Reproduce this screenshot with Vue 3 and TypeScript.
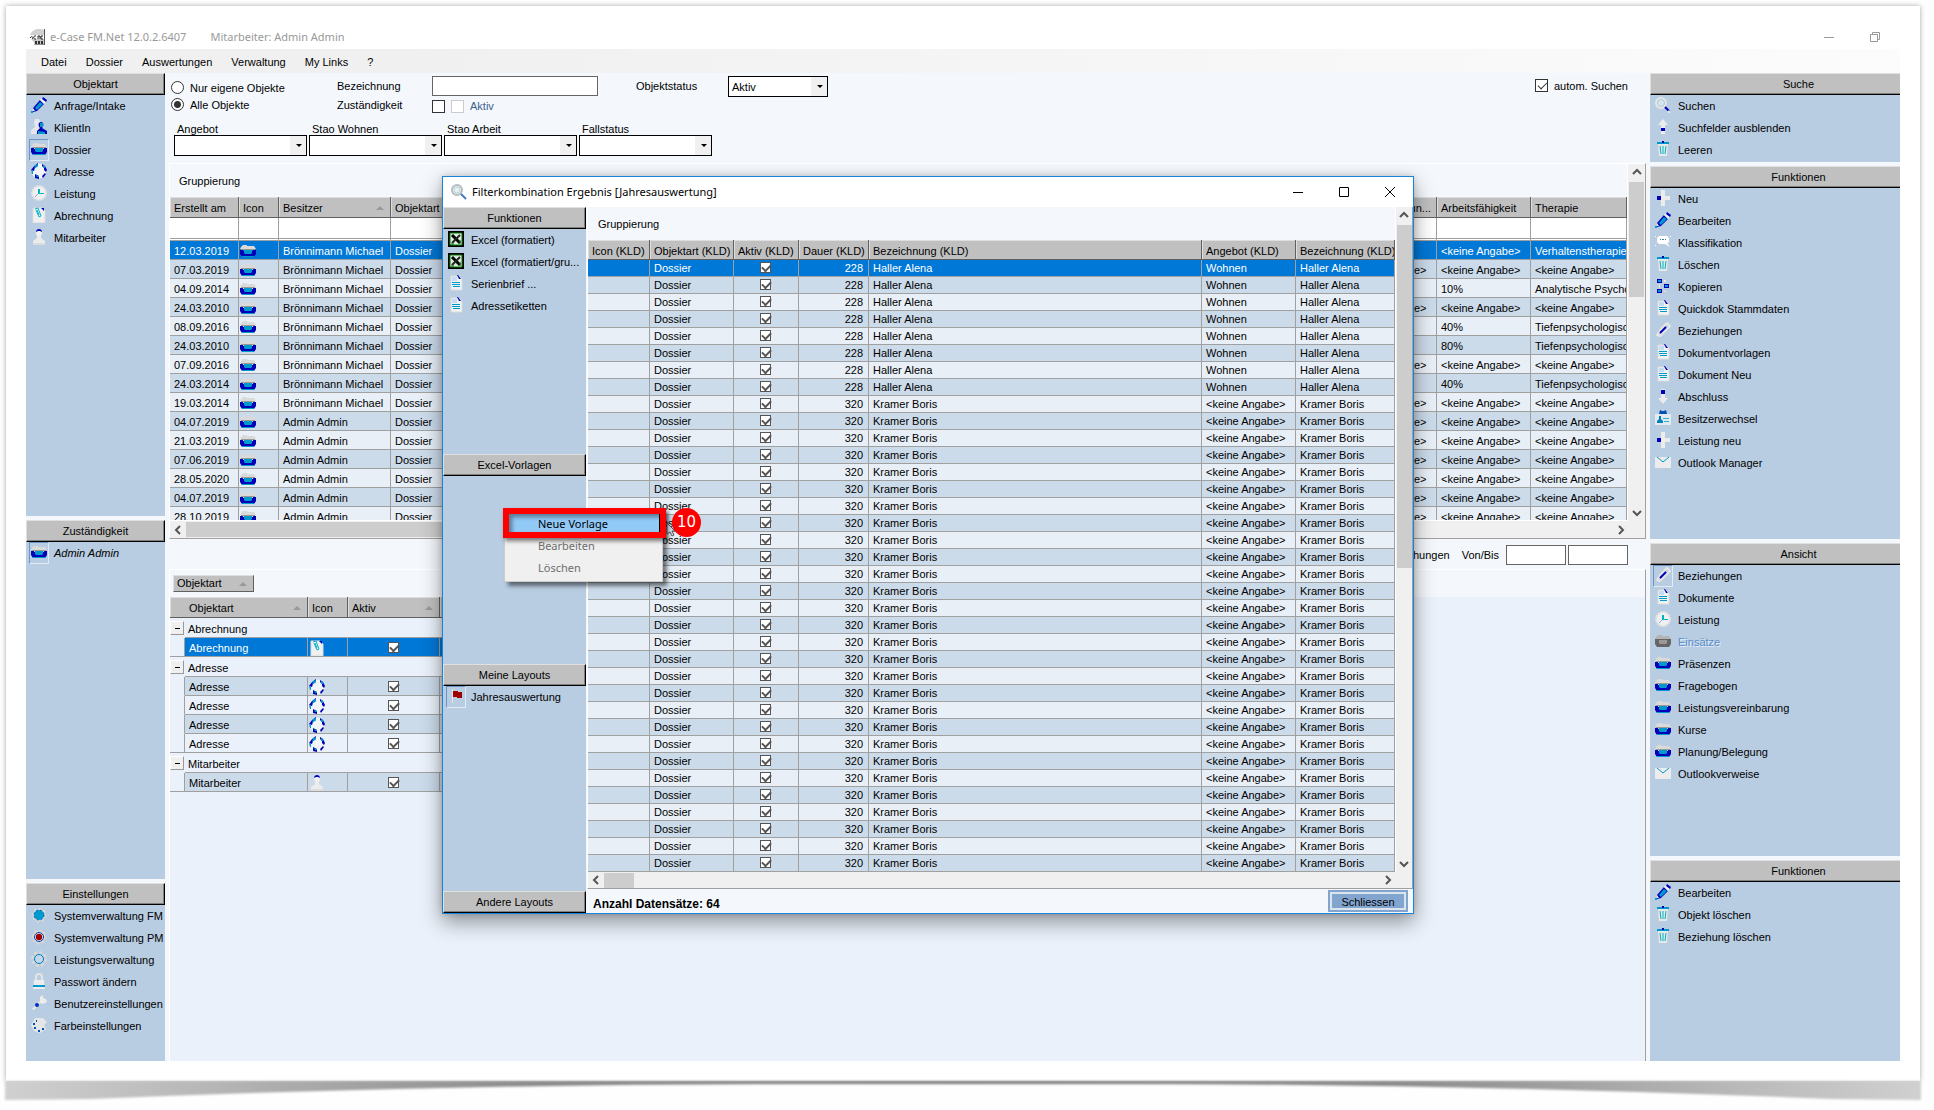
<script setup lang="ts">
interface Entry {
  icon: string
  text: string
  active?: boolean
  disabled?: boolean
  italic?: boolean
}
interface Panel {
  title: string
  entries: Entry[]
}

const menu: string[] = ['Datei', 'Dossier', 'Auswertungen', 'Verwaltung', 'My Links', '?']

const leftPanels: Panel[] = [
  {
    title: 'Objektart',
    entries: [
      { icon: 'pencil', text: 'Anfrage/Intake' },
      { icon: 'client', text: 'KlientIn' },
      { icon: 'folder', text: 'Dossier', active: true },
      { icon: 'globe', text: 'Adresse' },
      { icon: 'clock', text: 'Leistung' },
      { icon: 'bill', text: 'Abrechnung' },
      { icon: 'staff', text: 'Mitarbeiter' },
    ],
  },
  { title: 'Zuständigkeit', entries: [{ icon: 'folder', text: 'Admin Admin', active: true, italic: true }] },
  {
    title: 'Einstellungen',
    entries: [
      { icon: 'gear-blue', text: 'Systemverwaltung FM' },
      { icon: 'gear-red', text: 'Systemverwaltung PM' },
      { icon: 'gear-open', text: 'Leistungsverwaltung' },
      { icon: 'lock', text: 'Passwort ändern' },
      { icon: 'wrench', text: 'Benutzereinstellungen' },
      { icon: 'palette', text: 'Farbeinstellungen' },
    ],
  },
]

const rightPanels: Panel[] = [
  {
    title: 'Suche',
    entries: [
      { icon: 'search', text: 'Suchen' },
      { icon: 'up', text: 'Suchfelder ausblenden' },
      { icon: 'trash', text: 'Leeren' },
    ],
  },
  {
    title: 'Funktionen',
    entries: [
      { icon: 'plus', text: 'Neu' },
      { icon: 'pencil', text: 'Bearbeiten' },
      { icon: 'bubble', text: 'Klassifikation' },
      { icon: 'trash', text: 'Löschen' },
      { icon: 'copy', text: 'Kopieren' },
      { icon: 'doc', text: 'Quickdok Stammdaten' },
      { icon: 'link', text: 'Beziehungen' },
      { icon: 'doc', text: 'Dokumentvorlagen' },
      { icon: 'doc', text: 'Dokument Neu' },
      { icon: 'down', text: 'Abschluss' },
      { icon: 'badge', text: 'Besitzerwechsel' },
      { icon: 'plus', text: 'Leistung neu' },
      { icon: 'mail', text: 'Outlook Manager' },
    ],
  },
  {
    title: 'Ansicht',
    entries: [
      { icon: 'link', text: 'Beziehungen', active: true },
      { icon: 'doc', text: 'Dokumente' },
      { icon: 'clock', text: 'Leistung' },
      { icon: 'folder-grey', text: 'Einsätze', disabled: true },
      { icon: 'folder', text: 'Präsenzen' },
      { icon: 'folder', text: 'Fragebogen' },
      { icon: 'folder', text: 'Leistungsvereinbarung' },
      { icon: 'folder', text: 'Kurse' },
      { icon: 'folder', text: 'Planung/Belegung' },
      { icon: 'mail', text: 'Outlookverweise' },
    ],
  },
  {
    title: 'Funktionen',
    entries: [
      { icon: 'pencil', text: 'Bearbeiten' },
      { icon: 'trash', text: 'Objekt löschen' },
      { icon: 'trash', text: 'Beziehung löschen' },
    ],
  },
]

const dialogPanels: Panel[] = [
  {
    title: 'Funktionen',
    entries: [
      { icon: 'excel', text: 'Excel (formatiert)' },
      { icon: 'excel', text: 'Excel (formatiert/gru...' },
      { icon: 'doc', text: 'Serienbrief ...' },
      { icon: 'doc', text: 'Adressetiketten' },
    ],
  },
  { title: 'Excel-Vorlagen', entries: [] },
  { title: 'Meine Layouts', entries: [{ icon: 'flag', text: 'Jahresauswertung', active: true }] },
  { title: 'Andere Layouts', entries: [] },
]

const filters: string[] = ['Angebot', 'Stao Wohnen', 'Stao Arbeit', 'Fallstatus']

const none = '<keine Angabe>'
const deep = 'Tiefenpsychologisch fundiert'
const owner = 'Brönnimann Michael'
const admin = 'Admin Admin'
const dossiers: string[][] = [
  ['12.03.2019', owner, '', none, 'Verhaltenstherapie'],
  ['07.03.2019', owner, none, none, none],
  ['04.09.2014', owner, '', '10%', 'Analytische Psychotherapie'],
  ['24.03.2010', owner, none, none, none],
  ['08.09.2016', owner, '', '40%', deep],
  ['24.03.2010', owner, '', '80%', deep],
  ['07.09.2016', owner, none, none, none],
  ['24.03.2014', owner, '', '40%', deep],
  ['19.03.2014', owner, none, none, none],
  ['04.07.2019', admin, none, none, none],
  ['21.03.2019', admin, none, none, none],
  ['07.06.2019', admin, none, none, none],
  ['28.05.2020', admin, none, none, none],
  ['04.07.2019', admin, none, none, none],
  ['28.10.2019', admin, none, none, none],
]

const groups: { name: string; icon: string; count: number; selected?: boolean }[] = [
  { name: 'Abrechnung', icon: 'bill', count: 1, selected: true },
  { name: 'Adresse', icon: 'globe', count: 4 },
  { name: 'Mitarbeiter', icon: 'staff', count: 1 },
]

const resultHeads: string[] = [
  'Icon (KLD)', 'Objektart (KLD)', 'Aktiv (KLD)', 'Dauer (KLD)', 'Bezeichnung (KLD)', 'Angebot (KLD)', 'Bezeichnung (KLD)',
]
const results = Array.from({ length: 36 }, (_, i) =>
  i < 8 ? { days: 228, name: 'Haller Alena', offer: 'Wohnen' } : { days: 320, name: 'Kramer Boris', offer: none },
)
</script>

<template>
  <svg class="defs" aria-hidden="true">
    <defs>
      <symbol id="i-pencil" viewBox="0 0 16 16">
        <path d="M2 11 9 3l4 4-7 7-4 1z" fill="#0000bb" /><path d="M4 11 9 5l3 2-6 6z" fill="#0099cc" />
        <path d="m9 3 2-2 4 4-2 2z" fill="#f0f0f0" /><path d="m12 0 4 3-1 2-4-3z" fill="#0000bb" />
        <path d="M2 11 4 14 2 14z" fill="#eee" /><path d="M0 14h2v2H0z" fill="#0099cc" />
      </symbol>
      <symbol id="i-client" viewBox="0 0 16 16">
        <path d="M4 0h4l2 4-1 4 3 3v4H0v-4l4-3-1-4z" fill="#e4e8ee" />
        <path d="M10 3c3 0 3 4 1 6l5 3v3H6v-3l3-3c-2-2-2-6 1-6z" fill="#0000bb" /><path d="M9 4h3v4H9zM7 12l7 1v2H7z" fill="#0099cc" />
      </symbol>
      <symbol id="i-folder" viewBox="0 0 16 16">
        <path d="M3 2h4v1h7l2 3H0l1-2z" fill="#dadada" /><path d="M1 6h14v1H1z" fill="#999" />
        <path d="M0 7h3v1h10V7h3v4l-2 3H2l-2-3z" fill="#0000bb" /><path d="M4 7h8v3l-1 1H5l-1-1z" fill="#0099cc" /><path d="M2 13h12v1H2z" fill="#0099cc" />
      </symbol>
      <symbol id="i-folder-grey" viewBox="0 0 16 16">
        <path d="M3 2h4v1h7l2 3H0l1-2z" fill="#b4b4b4" /><path d="M0 6h16v5l-2 3H2l-2-3z" fill="#666" /><path d="M4 7h8v3l-1 1H5l-1-1z" fill="#999" />
      </symbol>
      <symbol id="i-globe" viewBox="0 0 16 16">
        <circle cx="8" cy="8" r="7.5" fill="#f2f4f6" />
        <path d="m3 3 4-3v3L4 5 3 8 0 7zM11 1l3 2 2 4-1 2-2-2 0-2-2-2zM14 10l1 1-3 4-1-2zM4 11l4 2v3l-4-1z" fill="#0000bb" />
        <path d="m4 2 3-1v2L3 6zM0 7l2 1v3l-1 0zM12 2l2 1v2h-2zM5 12l3 1v1H6z" fill="#0099cc" />
      </symbol>
      <symbol id="i-clock" viewBox="0 0 16 16">
        <circle cx="8" cy="8" r="7" fill="#f0f0f0" stroke="#e2e2e2" stroke-width="2" stroke-dasharray="2 1" />
        <path d="M7 4h2v4h4v1H7z" fill="#00b4c8" /><path d="m7 9-3 3" stroke="#8ad" />
      </symbol>
      <symbol id="i-bill" viewBox="0 0 16 16">
        <path d="M2 1h9l3 3v12H2z" fill="#f0f0f0" stroke="#ddd" /><path d="M10 1h3v3z" fill="#0000bb" />
        <path d="m4 2 3-1 3 8-2 1-3-7M6 3l2 5" fill="none" stroke="#00b4c8" />
      </symbol>
      <symbol id="i-staff" viewBox="0 0 16 16">
        <circle cx="8" cy="4" r="3" fill="#f0f0f0" /><path d="M5 3c0-4 6-4 6 0l-2-1H7z" fill="#0000bb" />
        <path d="M6 6h4v3l4 3v3H2v-3l4-3z" fill="#ececec" /><path d="M2 14h12v2H2z" fill="#ddd" />
      </symbol>
      <symbol id="i-gear-blue" viewBox="0 0 16 16">
        <circle cx="8" cy="8" r="6.500" fill="#d8d8d8" stroke="#d8d8d8" stroke-width="2" stroke-dasharray="2 3" />
        <circle cx="8" cy="8" r="5" fill="#0099d0" stroke="#0060c0" stroke-dasharray="2 2" />
      </symbol>
      <symbol id="i-gear-red" viewBox="0 0 16 16">
        <circle cx="8" cy="8" r="6.500" fill="#d8d8d8" stroke="#d8d8d8" stroke-width="2" stroke-dasharray="2 3" />
        <circle cx="8" cy="8" r="4.500" fill="#eee" stroke="#003cb0" /><circle cx="8" cy="8" r="3.200" fill="#a00000" />
      </symbol>
      <symbol id="i-gear-open" viewBox="0 0 16 16">
        <circle cx="8" cy="8" r="6.500" fill="none" stroke="#d8d8d8" stroke-width="3" stroke-dasharray="3 2" />
        <circle cx="8" cy="8" r="4.500" fill="#c4d6ea" stroke="#0080c0" />
      </symbol>
      <symbol id="i-lock" viewBox="0 0 16 16">
        <path d="M5 8V4c0-4 6-4 6 0v4" fill="none" stroke="#e4e4e4" stroke-width="2" /><path d="M3 7h10l1 9H2z" fill="#ececec" /><path d="M2 12h12v2H2z" fill="#0099cc" />
      </symbol>
      <symbol id="i-wrench" viewBox="0 0 16 16">
        <path d="m1 14 8-8V2l3-2v3l3 1 1 3-4 2-3-1-6 7z" fill="#ececec" /><circle cx="6" cy="10" r="2" fill="#0030c0" />
      </symbol>
      <symbol id="i-palette" viewBox="0 0 16 16">
        <path d="M4 1h8l4 4-3 3 2 4-6 4-6-2-3-6z" fill="#e6e6e6" />
        <path d="M2 6h2v2H2zM3 10h2v2H3zM7 13h2v2H7zM11 11h2v2h-2zM5 3h1v2H5z" fill="#0050c0" />
      </symbol>
      <symbol id="i-search" viewBox="0 0 16 16">
        <circle cx="6" cy="6" r="5" fill="#d6e6ee" stroke="#e6e6e6" stroke-width="2" /><circle cx="6" cy="6" r="3.500" fill="none" stroke="#a8ccd4" />
        <path d="m10 10 4 4" stroke="#0000bb" stroke-width="2" /><path d="m13 14 2 2" stroke="#e6e6e6" stroke-width="2" />
      </symbol>
      <symbol id="i-glass" viewBox="0 0 16 16">
        <circle cx="6" cy="6" r="5" fill="#e8f0f2" stroke="#b8bcc0" stroke-width="2" /><circle cx="6" cy="6" r="3" fill="none" stroke="#b4d4d8" />
        <path d="m10 10 5 5" stroke="#4a7ac0" stroke-width="2" />
      </symbol>
      <symbol id="i-up" viewBox="0 0 16 16"><path d="m8 0 5 6h-3v9H6V6H3z" fill="#ececec" /><path d="M6 9h4v3H6z" fill="#0000bb" /></symbol>
      <symbol id="i-down" viewBox="0 0 16 16"><path d="m8 16 5-6h-3V1H6v9H3z" fill="#ececec" /><path d="M6 2h4v4H6z" fill="#0000bb" /></symbol>
      <symbol id="i-trash" viewBox="0 0 16 16">
        <path d="M3 3h10l-1 12H4z" fill="#e8e8e8" /><path d="M2 1h12v2H2z" fill="#0099cc" /><path d="M7 0h2v2H7z" fill="#0000bb" />
        <path d="M5 5l1 8M8 5v8M11 5l-1 8" stroke="#00b0c0" />
      </symbol>
      <symbol id="i-plus" viewBox="0 0 16 16"><path d="M6 0h4v6h5v4h-5v6H6v-6H2V6h4z" fill="#ececec" /><path d="M2 6h4v4H2z" fill="#0000bb" /></symbol>
      <symbol id="i-bubble" viewBox="0 0 16 16">
        <path d="M0 2h1v1H0zM15 2h1v1h-1zM0 11h1v1H0z" fill="#fff" /><path d="M4 2h8l2 2v4l-2 2h1l2 3-5-3H4L2 8V4z" fill="#fff" />
        <path d="M5 5h1v1H5zM7 5h2v1H7zM10 5h1v1h-1z" fill="#3080a0" />
      </symbol>
      <symbol id="i-copy" viewBox="0 0 16 16">
        <path d="M2 1h5v4H2zM9 6h5v4H9zM2 11h5v4H2z" fill="#0000bb" /><path d="M3 2h3v2H3zM10 7h3v2h-3zM3 12h3v2H3z" fill="#0099cc" />
        <path d="M9 2h2v2H9zM4 6h1v4H4zM9 13h2v1H9z" fill="#e8e8e8" />
      </symbol>
      <symbol id="i-doc" viewBox="0 0 16 16">
        <path d="M3 1h8l3 3v11H3z" fill="#f0f2f4" stroke="#dcdcdc" /><path d="M4 2h5v4H4z" fill="#c4dcf4" /><path d="M9 0h1l3 4h-2z" fill="#0000bb" />
        <path d="M4 7.500h8M4 9.500h8M5 11.500h7" stroke="#0099cc" />
      </symbol>
      <symbol id="i-link" viewBox="0 0 16 16">
        <path d="m2 13 4-6 3 3-4 4zM7 6l5-5 3 3-5 5z" fill="none" stroke="#e6e6e6" stroke-width="2" stroke-linejoin="round" /><path d="m5 11 6-6" stroke="#0000bb" stroke-width="2" />
      </symbol>
      <symbol id="i-badge" viewBox="0 0 16 16">
        <path d="M0 4h16v11H0z" fill="#e4eaf0" /><path d="m5 0 2 1h2l2-1 1 4H4z" fill="#0050b8" />
        <path d="M4 6h2v3l2 2v2H2v-2l2-2z" fill="#0080c0" /><path d="M8 8h6v1H8zM9 11h5v1H9z" fill="#20b4d0" />
      </symbol>
      <symbol id="i-mail" viewBox="0 0 16 16"><path d="M0 3h16v11H0z" fill="#ececec" /><path d="m2 3 6 5 6-5" fill="none" stroke="#0099cc" stroke-width="1" /></symbol>
      <symbol id="i-excel" viewBox="0 0 16 16">
        <path d="M0 0h16v16H0z" fill="#000" /><path d="M2 2h12v12H2z" fill="#dcecdc" stroke="#087808" />
        <path d="m4 4 8 8" stroke="#000" stroke-width="3" /><path d="m12 4-8 8" stroke="#222" stroke-width="2" /><path d="M12 9v4M3 13h3" stroke="#087808" />
      </symbol>
      <symbol id="i-flag" viewBox="0 0 16 16"><path d="M4 1h1v14H4z" fill="#e8e8e8" /><path d="M5 3h5v1h4v6H9V9H5z" fill="#a00000" /></symbol>
      <symbol id="i-app" viewBox="0 0 16 16">
        <path d="M1 6c2-6 9-7 14-5v5z" fill="#d0d0d0" /><path d="M2 10h13v6H6l-1-3z" fill="#c8c8c8" /><path d="M15.500 0v16H5" fill="none" stroke="#555" />
        <path d="M1 9c2-3 4 0 2 1M7 7c-3-1-3 4 0 3M9 10V7h2v3M14 7h-2v3h2" fill="none" stroke="#222" /><path d="M6 12h2v3H6zM9 12h2v3H9zM12 12h2v3h-2z" fill="#333" />
      </symbol>
    </defs>
  </svg>

  <div class="page">
    <div class="paper">
      <header class="titlebar">
        <svg class="ic"><use href="#i-app" /></svg>
        <span class="app-name">e-Case FM.Net 12.0.2.6407</span>
        <span class="app-user">Mitarbeiter: Admin Admin</span>
        <button class="win" aria-label="Minimieren"><svg viewBox="0 0 10 10"><path d="M0 5.500h10" /></svg></button>
        <button class="win last" aria-label="Wiederherstellen"><svg viewBox="0 0 10 10"><path d="M.5 2.500h7v7h-7zM2.500 2.500v-2h7v7h-2" /></svg></button>
      </header>
      <nav class="menubar"><button v-for="m in menu" :key="m">{{ m }}</button></nav>

      <div class="stage">
        <aside class="side left">
          <section v-for="p in leftPanels" :key="p.title" class="panel">
            <h2>{{ p.title }}</h2>
            <button v-for="e in p.entries" :key="e.text" class="entry" :class="{ active: e.active, italic: e.italic }">
              <span class="slot"><svg class="ic"><use :href="'#i-' + e.icon" /></svg></span>{{ e.text }}
            </button>
          </section>
        </aside>

        <main class="center">
          <form class="search" @submit.prevent>
            <div class="search-top">
              <div class="radios">
                <label><input type="radio" name="scope" />Nur eigene Objekte</label>
                <label><input type="radio" name="scope" checked />Alle Objekte</label>
              </div>
              <div class="names">
                <label for="bez">Bezeichnung</label>
                <label for="zust">Zuständigkeit</label>
              </div>
              <div class="fields">
                <input id="bez" type="text" class="txt" />
                <div class="checks">
                  <input id="zust" type="checkbox" class="tick" />
                  <label><input type="checkbox" class="tick" disabled />Aktiv</label>
                </div>
              </div>
              <label class="status-label" for="status">Objektstatus</label>
              <span class="combo status"><select id="status"><option>Aktiv</option></select></span>
              <label class="auto"><input type="checkbox" class="tick" checked />autom. Suchen</label>
            </div>
            <div class="search-bottom">
              <label v-for="f in filters" :key="f">{{ f }}<span class="combo"><select><option></option></select></span></label>
            </div>
          </form>

          <section class="grid-box">
            <div class="grid-main">
              <div class="grouping">Gruppierung</div>
              <table class="grid dossiers">
                <colgroup><col class="w69" /><col class="w40" /><col class="w112" /><col class="w94" /><col /><col class="w94" /><col class="w94" /><col class="w96" /></colgroup>
                <thead>
                  <tr>
                    <th>Erstellt am</th><th>Icon</th><th>Besitzer<i class="sort"></i></th><th>Objektart</th><th></th>
                    <th class="end">Einschränkun...</th><th>Arbeitsfähigkeit</th><th>Therapie</th>
                  </tr>
                  <tr class="filter-row"><td v-for="n in 8" :key="n"></td></tr>
                </thead>
                <tbody>
                  <tr v-for="(d, i) in dossiers" :key="i" :class="{ sel: i === 0 }">
                    <td>{{ d[0] }}</td><td class="ico"><svg class="ic"><use href="#i-folder" /></svg></td><td>{{ d[1] }}</td><td>Dossier</td><td></td>
                    <td>{{ d[2] }}</td><td>{{ d[3] }}</td><td>{{ d[4] }}</td>
                  </tr>
                </tbody>
              </table>
            </div>
            <div class="vbar">
              <svg class="chev" viewBox="0 0 10 10"><path d="m1 7 4-4 4 4" /></svg><i class="thumb main-v"></i>
              <svg class="chev push-v" viewBox="0 0 10 10"><path d="m1 3 4 4 4-4" /></svg>
            </div>
            <div class="hbar">
              <svg class="chev" viewBox="0 0 10 10"><path d="m7 1-4 4 4 4" /></svg><i class="thumb main-h"></i>
              <svg class="chev push-h" viewBox="0 0 10 10"><path d="m3 1 4 4-4 4" /></svg>
            </div>
          </section>

          <div class="range">
            <span>Beziehungen</span>
            <label for="von">Von/Bis</label>
            <input id="von" type="text" class="txt" /><input type="text" class="txt" aria-label="Bis" />
          </div>

          <section class="relations">
            <div class="grouping2"><button class="chip">Objektart<i class="sort"></i></button></div>
            <table class="grid rel">
              <colgroup><col class="w15" /><col class="w123" /><col class="w40" /><col class="w92" /><col class="w60" /></colgroup>
              <thead><tr><th colspan="2" class="indent">Objektart<i class="sort"></i></th><th>Icon</th><th>Aktiv<i class="sort"></i></th><th></th></tr></thead>
              <tbody v-for="g in groups" :key="g.name">
                <tr class="group"><td><button class="fold" :aria-label="g.name + ' zuklappen'"></button></td><td colspan="4">{{ g.name }}</td></tr>
                <tr v-for="n in g.count" :key="n" :class="{ sel: g.selected, odd: n % 2 === 1 }">
                  <td class="gutter"></td><td>{{ g.name }}</td>
                  <td class="ico"><svg class="ic"><use :href="'#i-' + g.icon" /></svg></td>
                  <td class="mid"><input type="checkbox" class="mark" checked :aria-label="g.name + ' aktiv'" /></td><td></td>
                </tr>
              </tbody>
            </table>
          </section>
        </main>

        <aside class="side right">
          <section v-for="(p, i) in rightPanels" :key="i" class="panel">
            <h2>{{ p.title }}</h2>
            <button v-for="e in p.entries" :key="e.text" class="entry" :class="{ active: e.active }" :disabled="e.disabled">
              <span class="slot"><svg class="ic"><use :href="'#i-' + e.icon" /></svg></span>{{ e.text }}
            </button>
          </section>
        </aside>

        <div class="dialog" role="dialog" aria-labelledby="dlg-title">
          <header class="dlg-bar">
            <svg class="ic"><use href="#i-glass" /></svg>
            <span id="dlg-title">Filterkombination Ergebnis [Jahresauswertung]</span>
            <button class="win" aria-label="Minimieren"><svg viewBox="0 0 10 10"><path d="M0 5.500h10" /></svg></button>
            <button class="win" aria-label="Maximieren"><svg viewBox="0 0 10 10"><path d="M.5.500h9v9h-9z" /></svg></button>
            <button class="win" aria-label="Schliessen"><svg viewBox="0 0 10 10"><path d="m0 0 10 10M10 0 0 10" /></svg></button>
          </header>
          <div class="dlg-body">
            <aside class="dlg-side">
              <section v-for="p in dialogPanels" :key="p.title" class="panel">
                <h2>{{ p.title }}</h2>
                <button v-for="e in p.entries" :key="e.text" class="entry" :class="{ active: e.active }">
                  <span class="slot"><svg class="ic"><use :href="'#i-' + e.icon" /></svg></span>{{ e.text }}
                </button>
              </section>
            </aside>
            <div class="dlg-content">
              <section class="grid-box dlg-grid">
                <div class="grid-main">
                  <div class="grouping">Gruppierung</div>
                  <table class="grid results">
                    <colgroup><col class="w62" /><col class="w84" /><col class="w65" /><col class="w70" /><col /><col class="w94" /><col class="w99" /></colgroup>
                    <thead><tr><th v-for="(h, i) in resultHeads" :key="i">{{ h }}</th></tr></thead>
                    <tbody>
                      <tr v-for="(r, i) in results" :key="i" :class="{ sel: i === 0 }">
                        <td></td><td>Dossier</td><td class="mid"><input type="checkbox" class="mark" checked aria-label="Aktiv" /></td>
                        <td class="num">{{ r.days }}</td><td>{{ r.name }}</td><td>{{ r.offer }}</td><td>{{ r.name }}</td>
                      </tr>
                    </tbody>
                  </table>
                </div>
                <div class="vbar">
                  <svg class="chev" viewBox="0 0 10 10"><path d="m1 7 4-4 4 4" /></svg><i class="thumb dlg-v"></i>
                  <svg class="chev push-v" viewBox="0 0 10 10"><path d="m1 3 4 4 4-4" /></svg>
                </div>
                <div class="hbar">
                  <svg class="chev" viewBox="0 0 10 10"><path d="m7 1-4 4 4 4" /></svg><i class="thumb dlg-h"></i>
                  <svg class="chev push-h" viewBox="0 0 10 10"><path d="m3 1 4 4-4 4" /></svg>
                </div>
              </section>
              <footer class="dlg-foot"><strong>Anzahl Datensätze: 64</strong><button class="close">Schliessen</button></footer>
            </div>
          </div>

          <div class="context" role="menu">
            <button role="menuitem" class="hot">Neue Vorlage</button>
            <button role="menuitem" disabled>Bearbeiten</button>
            <button role="menuitem" disabled>Löschen</button>
          </div>
          <svg class="cursor" viewBox="0 0 10 16"><path d="M1 1v11l3-2 2 4 2-1-2-4h3z" /></svg>
          <div class="frame"></div>
          <div class="step">10</div>
        </div>
      </div>
    </div>
    <svg class="lift" viewBox="0 0 1920 24" preserveAspectRatio="none" aria-hidden="true">
      <defs>
        <linearGradient id="lift-fill">
          <stop offset="0" stop-color="#d0d0d0" /><stop offset=".1" stop-color="#b8b8b8" /><stop offset=".27" stop-color="#8c8c8c" />
          <stop offset=".5" stop-color="#808080" /><stop offset=".73" stop-color="#8c8c8c" /><stop offset=".9" stop-color="#b8b8b8" /><stop offset="1" stop-color="#d0d0d0" />
        </linearGradient>
      </defs>
      <path d="M3 0H1919V19L1830 18Q1500 4 1160 3H760Q420 4 90 18L3 19z" fill="url(#lift-fill)" />
    </svg>
  </div>
</template>

<style>
body { margin: 0; background: #fff; }
</style>

<style scoped>
* { box-sizing: border-box; }
button, input, select { font: inherit; color: inherit; margin: 0; }
button { border: 0; padding: 0; background: none; white-space: nowrap; }
.defs { position: absolute; width: 0; height: 0; }
.page {
  height: 100vh; padding: 6px 14px 0 6px; display: flex; flex-direction: column; overflow: hidden; background: #fefefe;
  font: 11px/16px 'Liberation Sans', Arial, sans-serif; color: #000;
}
.paper { flex: 1; min-height: 0; padding: 19px 20px 20px; display: flex; flex-direction: column; background: #fff; box-shadow: 0 0 5px rgba(0, 0, 0, .35); }
.lift { flex: none; display: block; width: calc(100% + 6px); height: 24px; margin: 0 0 5px -4px; filter: blur(1px); }
.ic { width: 16px; height: 16px; display: block; flex: none; }

.titlebar { flex: none; height: 24px; padding-left: 3px; display: flex; align-items: center; font: 11px/16px 'Noto Sans', sans-serif; color: #999; }
.titlebar .ic, .dlg-bar .ic { margin-right: 5px; }
.app-user { margin-left: 24px; margin-right: auto; }
.win { width: 46px; height: 24px; display: flex; align-items: center; justify-content: center; }
.win svg { width: 10px; height: 10px; overflow: visible; }
.win path { fill: none; stroke: currentColor; }
.titlebar .last { margin-right: 2px; }
.menubar { flex: none; height: 24px; padding: 1px 0 0 15px; display: flex; align-items: center; gap: 19px; background: linear-gradient(90deg, #f0f0f0 20%, #fcfcfc); }

.stage { flex: 1; min-height: 0; position: relative; display: grid; grid-template: minmax(0, 1fr) / 139px minmax(0, 1fr) 250px; background: #f4f8fc; }
.side { display: grid; gap: 4px; min-height: 0; }
.left { grid-template-rows: minmax(0, 443fr) minmax(0, 359fr) minmax(0, 178fr); }
.right { grid-template-rows: minmax(0, 89fr) minmax(0, 373fr) minmax(0, 313fr) minmax(0, 201fr); }
.panel { display: flex; flex-direction: column; min-height: 0; overflow: hidden; background: #b8cce2; }
.panel h2 {
  flex: none; height: 22px; margin: 0; font-size: 11px; line-height: 21px; font-weight: normal; text-align: center; background: #c0c0c0;
  border: 1px solid; border-color: #e0e0e0 #000 #000 #e0e0e0; box-shadow: inset -1px -1px #808080;
}
.right h2 { padding-left: 46px; border-right: 0; box-shadow: inset 0 -1px #808080; }
.entry { flex: none; height: 22px; padding-left: 3px; display: flex; align-items: flex-start; gap: 5px; line-height: 23px; }
.slot { flex: none; width: 20px; height: 22px; display: flex; justify-content: center; align-items: center; }
.slot .ic { margin-bottom: 2px; }
.active .slot { border: 1px solid; border-color: #6c94c6 #e0ebf8 #e0ebf8 #6c94c6; }
.italic { font-style: italic; }
.entry:disabled { color: #5c8cc8; text-shadow: 1px 1px #e4eefa; }

.center { padding: 0 4px; display: grid; grid-template-rows: 90px minmax(0, 376fr) 30px minmax(0, 492fr); min-width: 0; }
.search { display: flex; flex-direction: column; }
.search-top { height: 50px; padding: 3px 18px 0 2px; display: flex; }
.radios { width: 166px; padding-top: 3px; display: flex; flex-direction: column; }
.radios label { height: 17px; display: flex; align-items: center; gap: 6px; }
.radios input {
  appearance: none; width: 13px; height: 13px; border: 1px solid #333; border-radius: 50%; background: #fff;
}
.radios input:checked { background: radial-gradient(#333 0 3px, #fff 4px); }
.names { width: 95px; display: flex; flex-direction: column; line-height: 20px; }
.names label { height: 19px; }
.fields { width: 166px; display: flex; flex-direction: column; gap: 2px; }
.txt { height: 20px; width: 100%; border: 1px solid #646464; background: #fff; padding: 0 3px; border-radius: 0; }
.checks, .checks label, .auto { display: flex; align-items: center; gap: 6px; }
.checks label { color: #3c5f8c; }
.tick { appearance: none; width: 13px; height: 13px; border: 1px solid #333; background: #fff; position: relative; }
.tick:disabled { border-color: #ccc; }
.tick:checked::after { content: ''; position: absolute; left: 2px; top: 2px; width: 8px; height: 4px; border: solid #333; border-width: 0 0 1px 1px; transform: rotate(-45deg); }
.status-label { margin-left: 38px; width: 92px; line-height: 20px; }
.combo { position: relative; display: block; width: 133px; height: 21px; }
.combo.status { width: 100px; }
.combo select { appearance: none; width: 100%; height: 21px; border: 1px solid #000; border-radius: 0; background: #fff linear-gradient(#f0f0f0, #f0f0f0) right / 16px 100% no-repeat; padding: 0 3px; display: block; }
.combo::after { content: ''; position: absolute; right: 5px; top: 9px; border: solid transparent; border-width: 3px 3px 0; border-top-color: #000; }
.auto { margin-left: auto; height: 19px; }
.search-bottom { padding-left: 5px; display: flex; gap: 2px; line-height: 12px; }
.search-bottom label { text-indent: 3px; }

.grid-box { min-height: 0; min-width: 0; display: grid; grid-template: minmax(0, 1fr) 17px / minmax(0, 1fr) 17px; border: 1px solid; border-color: #fff #a0a0a0 #a0a0a0 #fff; background: #f0f0f0; }
.grid-main { min-width: 0; min-height: 0; overflow: hidden; background: #eaf1fa; border-right: 1px solid #fff; border-bottom: 1px solid #fff; }
.grouping { height: 33px; padding-left: 9px; line-height: 35px; background: #f4f8fc; }
.grid { table-layout: fixed; width: 100%; border-spacing: 0; }
.grid th, .grid td { padding: 0 0 0 4px; overflow: hidden; white-space: nowrap; text-align: left; font-weight: normal; border: solid #a0a0a0; border-width: 0 1px 1px 0; }
.grid th { height: 21px; padding: 2px 0 0 4px; line-height: 16px; background: #c0c0c0; border-color: #606060; box-shadow: inset 1px 1px #dedede; }
.grid th.end { text-align: right; padding-right: 5px; }
.sort { float: right; margin: 6px 6px 0 0; border: solid transparent; border-width: 0 4px 4px; border-bottom-color: #989898; }
.grid .filter-row td { height: 23px; padding: 0; background: #fff; border-bottom: 3px double #a0a0a0; }
.dossiers tbody tr { background: #e8eff7; }
.dossiers tbody tr:nth-child(even) { background: #ccdbea; }
.dossiers tbody td, .rel tbody td { height: 19px; padding-top: 2px; line-height: 16px; }
.grid .sel td { background-color: #0078d7; color: #fff; }
.grid tbody .ico { padding-left: 1px; }
.w15 { width: 15px; } .w40 { width: 40px; } .w60 { width: 60px; } .w62 { width: 62px; } .w65 { width: 65px; } .w69 { width: 69px; } .w70 { width: 70px; }
.w84 { width: 84px; } .w92 { width: 92px; } .w94 { width: 94px; } .w96 { width: 96px; } .w99 { width: 99px; } .w112 { width: 112px; } .w123 { width: 123px; }
.vbar { display: flex; flex-direction: column; align-items: center; }
.hbar { grid-column: 1 / 3; display: flex; align-items: center; padding-right: 16px; }
.chev { width: 10px; height: 10px; flex: none; margin: 3px; }
.chev path { fill: none; stroke: #555; stroke-width: 2; }
.push-v { margin-top: auto; }
.push-h { margin-left: auto; }
.thumb { background: #cdcdcd; flex: none; }
.main-v { width: 15px; height: 115px; margin-top: 2px; }
.main-h { width: 45%; height: 15px; }
.dlg-v { width: 15px; height: 343px; margin-top: 2px; }
.dlg-h { width: 30px; height: 15px; }

.range { padding: 1px 18px 0 0; display: flex; align-items: center; justify-content: flex-end; gap: 2px; }
.range span { margin-right: 10px; }
.range label { margin-right: 5px; }
.range .txt { width: 60px; }

.relations { min-height: 0; overflow: hidden; border: solid #fff; border-width: 1px 0 0 1px; border-right: 1px solid #a0a0a0; background: #eaf1fa; }
.grouping2 { height: 27px; padding: 5px 3px; background: #f4f8fc; }
.chip { width: 81px; height: 17px; padding-left: 3px; display: block; text-align: left; line-height: 15px; background: #c0c0c0; border: 1px solid; border-color: #dedede #606060 #606060 #dedede; }
.grid.rel { width: 330px; }
.grid.rel th.indent { padding-left: 19px; }
.rel .group td { height: 20px; border-right: 0; }
.grid.rel .group td:first-child { padding: 0; border-bottom-color: transparent; }
.grid.rel .group td:last-child { padding-left: 3px; }
.rel .odd { background: #ccdbea; }
.rel .gutter, .rel .sel .gutter { background: #eaf1fa; border-bottom-color: transparent; }
.rel tr:last-child .gutter { border-bottom-color: #a0a0a0; }
.fold { display: block; width: 14px; height: 14px; background: #f0f0f0 linear-gradient(#000, #000) 4px 6px / 5px 1px no-repeat; border: 1px solid; border-color: #fff #999 #999 #fff; }
.grid tbody .mid { text-align: center; padding: 0; }
.grid.results .mid { padding: 0 2px 2px 0; }
.mark { appearance: none; display: block; margin: 0 auto; width: 11px; height: 11px; border: 1px solid #555; background: #fff; position: relative; }
.mark::after { content: ''; position: absolute; left: 1px; top: 1px; width: 7px; height: 4px; border: solid #555; border-width: 0 0 2px 2px; transform: rotate(-45deg); }

.dialog { position: absolute; left: 416px; right: 486px; top: 103px; border: 1px solid #1883d7; background: #fff; box-shadow: 0 8px 20px rgba(0, 0, 0, .4), 0 0 6px rgba(0, 0, 0, .15); }
.dlg-bar { height: 30px; padding-left: 8px; display: flex; align-items: center; font: 11px/16px 'Noto Sans', sans-serif; color: #000; }
.dlg-bar #dlg-title { margin-right: auto; }
.dlg-body { display: grid; grid-template-columns: 143px minmax(0, 1fr); gap: 1px; background: #f4f8fc; }
.dlg-side { display: grid; grid-template-rows: 247fr 210fr 227fr 22px; }
.dlg-grid { border-top: 0; grid-template: minmax(0, auto) 16px / minmax(0, 1fr) 16px; }
.dlg-grid .grid-main { border-bottom: 0; }
.dlg-grid .grouping { padding-left: 10px; }
.grid.results th { height: 20px; }
.results td { height: 17px; line-height: 16px; }
.results tr { background: #e8eff7; }
.results tr:nth-child(even) { background: #ccdbea; }
.grid.results td.num { text-align: right; padding-right: 5px; }
.dlg-foot { height: 24px; padding: 0 5px 0 6px; display: flex; align-items: center; justify-content: space-between; }
.dlg-foot strong { font: bold 12px/16px 'Liberation Sans', sans-serif; padding-top: 6px; }
.close { width: 80px; height: 22px; padding-top: 1px; background: #82a5d0; border: 2px solid #82a5d0; box-shadow: inset 0 0 0 2px #dce4ee; }

.context { position: absolute; left: 61px; top: 333px; width: 159px; padding: 2px; display: flex; flex-direction: column; background: #f0f0f0; border: 1px solid #ccc; box-shadow: 4px 4px 4px rgba(0, 0, 0, .5); font: 11px/22px 'Noto Sans', sans-serif; }
.context button { height: 22px; padding-left: 31px; text-align: left; color: #6d6d6d; }
.context .hot { background: #91c9f7; color: #000; border-right: 1px solid #000; }
.cursor { position: absolute; left: 223px; top: 343px; width: 10px; height: 20px; fill: #d4dce4; stroke: #555; }
.frame { position: absolute; left: 60px; top: 331px; width: 163px; height: 30px; border: 6px solid #f00; box-shadow: 2px 3px 4px rgba(0, 0, 0, .5), inset 3px 3px 4px rgba(0, 0, 0, .4); }
.step { position: absolute; left: 229px; top: 331px; width: 29px; height: 29px; border-radius: 50%; background: #f00; color: #fff; text-align: center; font: 15px/28px 'DejaVu Sans', sans-serif; }
</style>
